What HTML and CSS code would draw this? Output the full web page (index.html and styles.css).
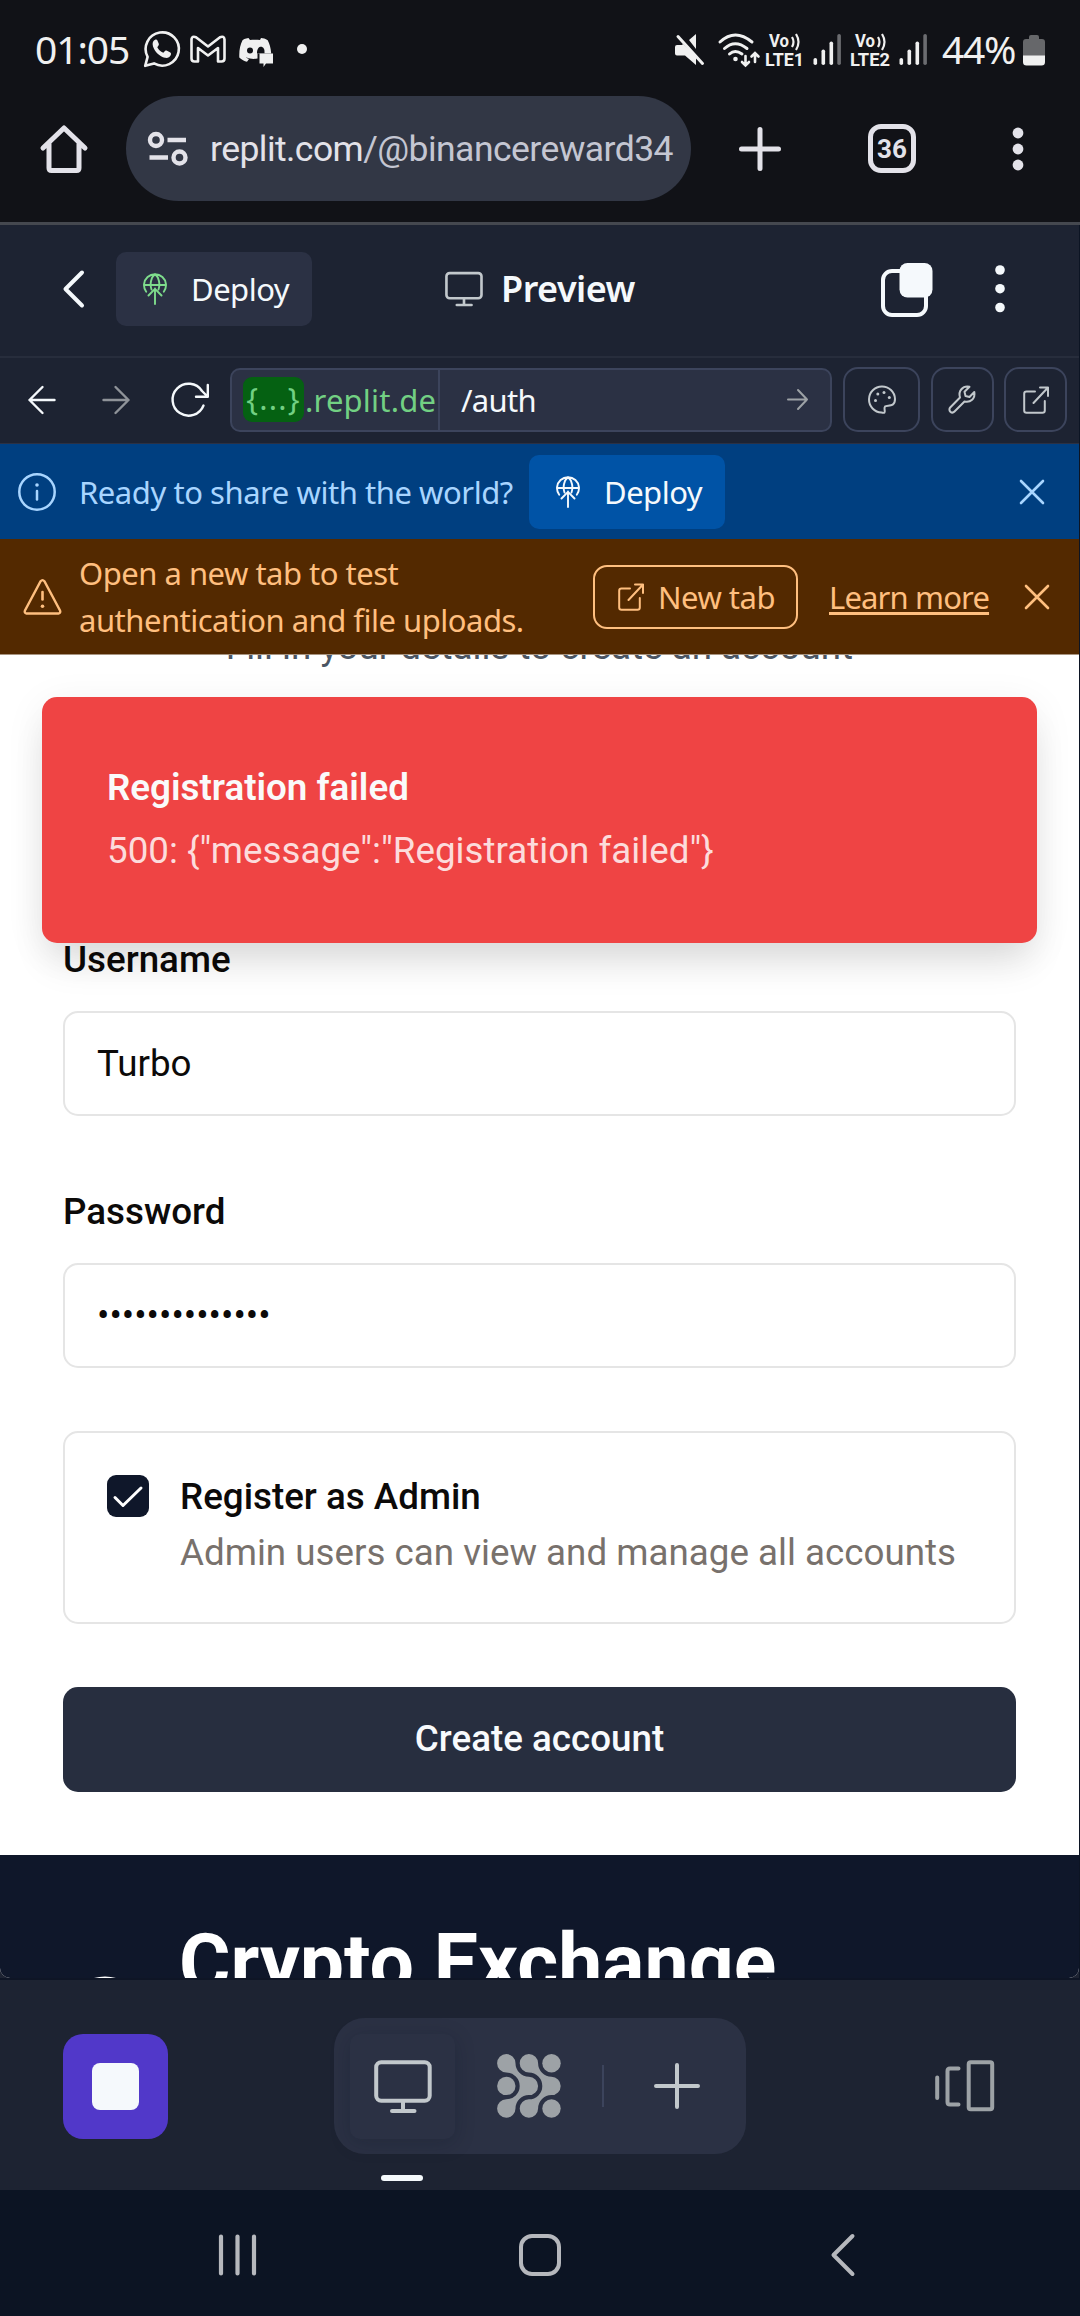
FILE: index.html
```html
<!DOCTYPE html>
<html lang="en">
<head>
<meta charset="utf-8">
<title>Preview</title>
<link rel="stylesheet" href="styles.css">
</head>
<body>
<svg width="0" height="0" class="defs">
  <symbol id="deploy" viewBox="0 0 24 32"><g fill="none" stroke="currentColor" stroke-width="1.9" stroke-linecap="round" stroke-linejoin="round"><path d="M3.200 18.800A11 11 0 1 1 20.800 18.800M1.200 12H22.800M8.500 16.500C6.600 11 8 4.500 12 1C16 4.500 17.400 11 15.500 16.500M12 31V15.500M5.500 22.500L12 15.800L18.500 22.500"/></g></symbol>
  <symbol id="external" viewBox="0 0 26 28"><g fill="none" stroke="currentColor" stroke-width="2" stroke-linecap="round" stroke-linejoin="round"><path d="M12 5.5H3.5A2.3 2.3 0 0 0 1.2 7.8V24.5A2.3 2.3 0 0 0 3.5 26.8H19.5A2.3 2.3 0 0 0 21.8 24.5V15M17 1.5H25V10M25 1.5L10.5 17"/></g></symbol>
  <symbol id="close" viewBox="0 0 26 26"><path d="M2 2L24 24M24 2L2 24" fill="none" stroke="currentColor" stroke-width="2.6" stroke-linecap="round"/></symbol>
  <symbol id="monitor" viewBox="0 0 58 53"><g fill="none" stroke="currentColor" stroke-width="4" stroke-linecap="round" stroke-linejoin="round"><rect x="2.2" y="2.2" width="53.5" height="38.5" rx="5"/><path d="M29 41V51M18 51H40.500"/></g></symbol>
</svg>

<header class="status">
  <span class="clock">01:05</span>
  <svg class="i-wa" viewBox="0 0 37 38"><path d="M2.200 35.800L4.600 26.800A16.600 16.600 0 1 1 11 33.400Z" fill="none" stroke="#f0f0f0" stroke-width="2.600" stroke-linejoin="round"/><path d="M12.500 9.500C10 10.500 9 13 10 16.500C12 22 16.500 26.500 22 27.800C25 28.300 27.500 26.800 28 24.200C28.200 23 27.500 22.500 26.500 22L23.500 20.600C22.600 20.300 22 20.700 21.500 21.400L20.300 22.800C17.500 21.600 15.500 19.700 14.300 17.200L15.500 15.500C16 14.800 16 14.200 15.700 13.500L14.300 10.300C14 9.500 13.300 9.200 12.500 9.500Z" fill="#f0f0f0"/></svg>
  <svg class="i-gm" viewBox="0 0 36 28"><path d="M1.500 4V23.500Q1.500 26.500 4.500 26.500H8V13L18 20.500L28 13V26.500H31.500Q34.500 26.500 34.500 23.500V4.500Q34 .5 30 2.200L18 11.500L6 2.200Q2 .5 1.500 4.500Z" fill="none" stroke="#f0f0f0" stroke-width="2.600" stroke-linejoin="round"/></svg>
  <svg class="i-dc" viewBox="0 0 34 30"><path d="M9.500 1C6 1.500 4 2.500 3.500 3.200C1.200 8 0 13 .3 20.500C2.500 22.700 5.500 24.300 8 24.800L10 22C8 21.500 7 20.500 7 20.300C11 22 15 22.300 18.500 21.500V16.500H32.200C31.800 11 30.500 6.500 28.700 3.200C26.500 1.700 24 1.200 22 1L21 3C18 2.600 14 2.600 11 3Z" fill="#f0f0f0"/><circle cx="11" cy="13.500" r="3" fill="#111217"/><path d="M18 16.500C18 11.500 20 9.800 22 9.800C24 9.800 25.800 12 25.500 15V16.500Z" fill="#111217"/><path d="M20.500 16.500H34V26.500H27L24.500 30V26.500H20.500Z" fill="#f0f0f0"/></svg>
  <span class="more-dot"></span>
  <svg class="i-status" viewBox="0 0 170 36">
    <g fill="#f0f0f0"><path d="M2 11H7L8 10L21 22V31L10 21.500H2Q0 21.500 0 19.500V13Q0 11 2 11ZM14 6L21 0V15Z"/><circle cx="60.500" cy="25" r="2.300"/>
    <rect x="138.500" y="24" width="3.600" height="7" rx="1.800"/><rect x="146.500" y="15.500" width="3.600" height="15.500" rx="1.800"/><rect x="154.500" y="7.500" width="3.600" height="23.500" rx="1.800"/></g>
    <rect x="162.300" y="0" width="3.600" height="31" rx="1.800" fill="#6b6c70"/>
    <path d="M3 2.500L27.500 29.500" stroke="#f0f0f0" stroke-width="3" stroke-linecap="round"/>
    <g fill="none" stroke="#f0f0f0" stroke-width="3" stroke-linecap="round"><path d="M45 8Q60 -6 77 8M49.500 14.500Q60 5 72 14.500M54.500 20Q60 15 67 20"/><path d="M70.500 22V31M67 28L70.500 31.500L74 28M80 28V19.500M76.500 22.500L80 19L83.500 22.500" stroke-width="2.600"/></g>
    <g fill="#f0f0f0" class="volte"><text x="94" y="13" textLength="20" lengthAdjust="spacingAndGlyphs">Vo</text><text x="90" y="31.500" textLength="39" lengthAdjust="spacingAndGlyphs">LTE1</text></g>
    <path d="M117 3Q120 8 117 13M121 0Q126 8 121 16" fill="none" stroke="#f0f0f0" stroke-width="2.200"/>
  </svg>
  <svg class="i-status2" viewBox="0 0 80 36">
    <g fill="#f0f0f0" class="volte"><text x="5" y="13" textLength="20" lengthAdjust="spacingAndGlyphs">Vo</text><text x="0" y="31.500" textLength="40" lengthAdjust="spacingAndGlyphs">LTE2</text></g>
    <path d="M28 3Q31 8 28 13M32 0Q37 8 32 16" fill="none" stroke="#f0f0f0" stroke-width="2.200"/>
    <g fill="#f0f0f0"><rect x="49.500" y="24" width="3.600" height="7" rx="1.800"/><rect x="57.500" y="15.500" width="3.600" height="15.500" rx="1.800"/><rect x="65.500" y="7.500" width="3.600" height="23.500" rx="1.800"/></g>
    <rect x="73.300" y="0" width="3.600" height="31" rx="1.800" fill="#6b6c70"/>
  </svg>
  <span class="percent">44%</span>
  <svg class="i-batt" viewBox="0 0 22 31"><path d="M6 4V2Q6 0 8 0H14Q16 0 16 2V4H19Q22 4 22 7V21H0V7Q0 4 3 4Z" fill="#66676a"/><path d="M0 20.500H22V27Q22 30.500 18.500 30.500H3.500Q0 30.500 0 27Z" fill="#f0f0f0"/></svg>
</header>

<nav class="browser">
  <svg class="i-home" viewBox="0 0 48 50"><path d="M3 24L24 4L45 24M9 20V44Q9 46.500 11.500 46.500H36.500Q39 46.500 39 44V20" fill="none" stroke="#e3e2e9" stroke-width="5" stroke-linecap="round" stroke-linejoin="round"/></svg>
  <div class="omnibox">
    <svg class="i-site" viewBox="0 0 40 34"><g fill="none" stroke="#e3e2e9" stroke-width="4.400"><circle cx="8" cy="8" r="6"/><circle cx="31.500" cy="25.500" r="6"/><path d="M19.500 8H38M1.500 25.500H20"/></g></svg>
    <span class="url"><b>replit.com</b>/@binancereward34</span>
  </div>
  <svg class="i-plus" viewBox="0 0 42 44"><path d="M21 2.500V41.500M2.500 22H39.500" stroke="#e3e2e9" stroke-width="5" stroke-linecap="round"/></svg>
  <div class="tabs">36</div>
  <svg class="i-dots" viewBox="0 0 12 44"><g fill="#e3e2e9"><circle cx="6" cy="6" r="5.400"/><circle cx="6" cy="22" r="5.400"/><circle cx="6" cy="38" r="5.400"/></g></svg>
</nav>

<div class="workspace">
  <div class="topbar">
    <svg class="i-back" viewBox="0 0 22 38"><path d="M19 2.500L2.500 19L19 35.500" fill="none" stroke="#f5f9fc" stroke-width="4" stroke-linecap="round" stroke-linejoin="round"/></svg>
    <div class="deploy dark"><svg><use href="#deploy"/></svg><span>Deploy</span></div>
    <svg class="i-mon"><use href="#monitor"/></svg>
    <h2>Preview</h2>
    <svg class="i-layers" viewBox="0 0 52 54"><rect x="2" y="8" width="43" height="44" rx="9" fill="none" stroke="#f5f9fc" stroke-width="4"/><rect x="18.500" y="0" width="33" height="34.500" rx="8" fill="#f5f9fc"/></svg>
    <svg class="i-menu" viewBox="0 0 10 50"><g fill="#f5f9fc"><circle cx="5" cy="6" r="4.800"/><circle cx="5" cy="24.700" r="4.800"/><circle cx="5" cy="43.500" r="4.800"/></g></svg>
  </div>
  <div class="address">
    <svg class="i-left" viewBox="0 0 28 28"><path d="M26.500 14H1.500M14.500 1L1.500 14L14.500 27" fill="none" stroke="#f5f9fc" stroke-width="2.400" stroke-linecap="round" stroke-linejoin="round"/></svg>
    <svg class="i-right" viewBox="0 0 28 28"><path d="M1.500 14H26.500M13.500 1L26.500 14L13.500 27" fill="none" stroke="#8f9399" stroke-width="2.400" stroke-linecap="round" stroke-linejoin="round"/></svg>
    <svg class="i-reload" viewBox="0 0 38 36"><path d="M32.500 23.500A16 16 0 1 1 31 9L36.500 14.500M36.800 3V14.800H25" fill="none" stroke="#f5f9fc" stroke-width="2.400" stroke-linecap="round" stroke-linejoin="round"/></svg>
    <div class="field">
      <div class="host"><span class="chip">{...}</span><span class="dom">.replit.de</span></div>
      <div class="path"><span>/auth</span><svg viewBox="0 0 21 21"><path d="M1 10.500H20M11 1L20 10.500L11 20" fill="none" stroke="#9da2a6" stroke-width="2" stroke-linecap="round" stroke-linejoin="round"/></svg></div>
    </div>
    <div class="tool wide"><svg viewBox="0 0 28 29"><path d="M16.500 27.500C17.500 25 15.500 23.500 17 21.500C19 19.500 27 23 27 14A13 13 0 1 0 13.500 27.500C14.500 27.800 16 28 16.500 27.500Z" fill="none" stroke="#c2c8cc" stroke-width="2"/><g fill="#c2c8cc"><circle cx="7.500" cy="15.500" r="1.500"/><circle cx="9.800" cy="9" r="1.500"/><circle cx="16" cy="7.500" r="1.500"/><circle cx="21.300" cy="12.500" r="1.500"/></g></svg></div>
    <div class="tool"><svg viewBox="0 0 28 29"><path d="M2.200 22.500L12 12.500C10 6 14.500 .5 21.500 1.800L16.500 6.800L17.500 11L21.500 12L26.300 7C27.500 13.500 22.500 18 16.500 16.500L6.500 26.500A2.900 2.900 0 0 1 2.200 22.500Z" fill="none" stroke="#c2c8cc" stroke-width="2" stroke-linejoin="round"/></svg></div>
    <div class="tool"><svg class="ext"><use href="#external"/></svg></div>
  </div>
  <div class="banner info">
    <svg class="i-info" viewBox="0 0 38 38"><circle cx="19" cy="19" r="17.700" fill="none" stroke="#a8d5ff" stroke-width="2.500"/><path d="M19 18V26.500" stroke="#a8d5ff" stroke-width="2.500" stroke-linecap="round"/><circle cx="19" cy="12" r="1.800" fill="#a8d5ff"/></svg>
    <span class="msg">Ready to share with the world?</span>
    <div class="deploy blue"><svg><use href="#deploy"/></svg><span>Deploy</span></div>
    <svg class="x"><use href="#close"/></svg>
  </div>
  <div class="banner warn">
    <svg class="i-warn" viewBox="0 0 39 36"><path d="M17.600 2.200Q19.500 0 21.400 2.200L37 31.500Q38 34 35.500 34.500H3.500Q1 34 2 31.500Z" fill="none" stroke="#ffbf7f" stroke-width="2.400"/><path d="M19.500 13V20.500" stroke="#ffbf7f" stroke-width="2.600" stroke-linecap="round"/><circle cx="19.500" cy="27.200" r="1.800" fill="#ffbf7f"/></svg>
    <p class="msg">Open a new tab to test<br><span>authentication and file uploads.</span></p>
    <div class="newtab"><svg><use href="#external"/></svg><span>New tab</span></div>
    <a class="learn">Learn more</a>
    <svg class="x"><use href="#close"/></svg>
  </div>
  <main class="viewport">
    <form class="form">
      <p class="hint">Fill in your details to create an account</p>
      <label class="first">Username</label>
      <input type="text" value="Turbo">
      <label class="second">Password</label>
      <input type="password" value="abcdefghijklmn">
      <div class="admin">
        <svg viewBox="0 0 42 42"><rect width="42" height="42" rx="9" fill="#0f172a"/><path d="M8 22.500L16 30.500L34 13" fill="none" stroke="#fff" stroke-width="3" stroke-linecap="round" stroke-linejoin="round"/></svg>
        <div><strong>Register as Admin</strong><span>Admin users can view and manage all accounts</span></div>
      </div>
      <button type="button">Create account</button>
    </form>
    <section class="hero">
      <svg viewBox="0 0 84 84"><circle cx="42" cy="42" r="35" fill="none" stroke="#fff" stroke-width="7"/></svg>
      <h1>Crypto Exchange</h1>
    </section>
    <div class="toast"><strong>Registration failed</strong><span>500: {"message":"Registration failed"}</span></div>
  </main>
</div>

<footer class="dock">
  <div class="stop"><i></i></div>
  <div class="pill">
    <div class="tab"><svg><use href="#monitor"/></svg></div>
    <svg class="i-grid" viewBox="0 0 64 64"><g fill="#9da2a6"><path id="flow" d="M9.300 .1A9.200 9.200 0 0 1 18.500 9.300A13.400 13.400 0 0 0 31.900 22.700A9.200 9.200 0 0 1 31.900 41.100A13.400 13.400 0 0 0 18.500 54.500A9.200 9.200 0 1 1 9.300 45.300A13.400 13.400 0 0 0 9.300 18.500A9.200 9.200 0 1 1 9.300 .1Z"/><use href="#flow" x="22.600"/><circle cx="9.300" cy="31.900" r="9.200"/><circle cx="54.500" cy="9.300" r="9.200"/><circle cx="54.500" cy="54.500" r="9.200"/></g></svg>
    <span class="sep"></span>
    <svg class="i-add" viewBox="0 0 46 46"><path d="M23 2V44M2 23H44" stroke="#c2c8cc" stroke-width="4" stroke-linecap="round"/></svg>
  </div>
  <svg class="i-cards" viewBox="0 0 60 52"><g fill="none" stroke="#9da2a6" stroke-width="4" stroke-linecap="round" stroke-linejoin="round"><path d="M2.200 17.500V38M23.500 8.500H15Q12.500 8.500 12.500 11V42Q12.500 44.500 15 44.500H23.500"/><rect x="33.700" y="2.200" width="23.500" height="47" rx="2"/></g></svg>
</footer>
<div class="sysnav">
  <svg class="n-recent" viewBox="0 0 40 42"><path d="M3 2.500V39.500M19.500 2.500V39.500M36 2.500V39.500" stroke="#b6b8bd" stroke-width="4.200" stroke-linecap="round"/></svg>
  <svg class="n-home" viewBox="0 0 42 42"><rect x="2" y="2" width="38" height="38" rx="11" fill="none" stroke="#b6b8bd" stroke-width="4"/></svg>
  <svg class="n-back" viewBox="0 0 24 42"><path d="M21.500 2L2.500 21L21.500 40" fill="none" stroke="#b6b8bd" stroke-width="4" stroke-linecap="round" stroke-linejoin="round"/></svg>
</div>
</body>
</html>
```

FILE: styles.css
```css
* { box-sizing: border-box; }
body { margin: 0; width: 1080px; height: 2316px; overflow: hidden; background: #0c1423; font-family: Roboto, sans-serif; font-size: 36.75px; }
svg { display: block; flex: none; overflow: visible; }
span, strong, a, h1, h2 { white-space: nowrap; }
.defs { position: absolute; }

.status { height: 96px; background: #111217; display: flex; align-items: center; color: #f0f0f0; font-family: "Noto Sans", sans-serif; font-size: 39px; padding: 0 0 0 35px; }
.clock { width: 108px; letter-spacing: -1.1px; }
.i-wa { width: 37px; height: 38px; margin-top: 2px; }
.i-gm { width: 36px; height: 28px; margin: 1px 0 0 10px; }
.i-dc { width: 34px; height: 30px; margin: 7px 0 0 13px; }
.more-dot { width: 10px; height: 10px; border-radius: 50%; background: #f0f0f0; margin: 2px 0 0 24px; }
.i-status { width: 170px; height: 36px; margin: 8px 0 0 368px; }
.i-status2 { width: 80px; height: 36px; margin: 8px 0 0 5px; }
.volte { font: 700 18px Roboto, sans-serif; }
.percent { width: 81px; margin-left: 12px; letter-spacing: -1.3px; }
.i-batt { width: 22px; height: 31px; margin-top: 4px; }

.browser { height: 129px; background: #111217; border-bottom: 3px solid #45484f; display: flex; align-items: center; padding: 0 0 21px 40px; }
.i-home { width: 48px; height: 50px; }
.omnibox { width: 565px; height: 105px; margin-left: 38px; border-radius: 53px; background: #323745; display: flex; align-items: center; padding-left: 22px; }
.i-site { width: 40px; height: 34px; }
.url { width: 470px; margin-left: 22px; color: #c4c6d2; font-size: 35.5px; letter-spacing: -.55px; }
.url b { color: #e3e2e9; font-weight: 400; }
.i-plus { width: 42px; height: 44px; margin-left: 48px; }
.tabs { width: 48px; height: 49px; margin-left: 87px; border: 5px solid #e3e2e9; border-radius: 13px; color: #e3e2e9; font-weight: 700; font-size: 26px; line-height: 40px; text-align: center; }
.i-dots { width: 12px; height: 44px; margin-left: 96px; }

.workspace { width: 1079px; font-family: "Noto Sans", sans-serif; font-size: 31px; color: #f5f9fc; background: #1d2332; }
.topbar { height: 133px; display: flex; align-items: center; padding: 0 0 4px 63px; border-bottom: 2px solid #272d3c; }
.i-back { width: 22px; height: 38px; }
.deploy { height: 74px; width: 196px; border-radius: 10px; display: flex; align-items: center; padding-left: 27px; }
.deploy svg { width: 24px; height: 32px; }
.deploy span { margin-left: 24px; letter-spacing: -.5px; }
.dark { background: #2b3144; margin-left: 31px; }
.dark svg { color: #7edc8c; }
.i-mon { width: 38px; height: 36px; margin-left: 133px; color: #c2c8cc; }
h2 { margin: 0 0 0 18px; width: 142px; font-size: 36px; font-weight: 600; letter-spacing: -.5px; }
.i-layers { width: 52px; height: 54px; margin: 2px 0 0 238px; }
.i-menu { width: 10px; height: 50px; margin: 1px 0 0 62px; }

.address { height: 86px; display: flex; align-items: center; padding: 0 0 2px 28px; border-bottom: 1px solid #2b3144; }
.i-left, .i-right { width: 28px; height: 28px; }
.i-right { margin-left: 46px; }
.i-reload { width: 38px; height: 36px; margin-left: 41px; }
.field { width: 602px; height: 64px; margin-left: 21px; border: 2px solid #3c445c; border-radius: 10px; background: #2b3144; display: flex; align-items: stretch; }
.host { width: 208px; border-right: 2px solid #3c445c; display: flex; align-items: center; color: #72d083; padding-left: 11px; }
.chip { width: 61px; height: 45px; flex: none; line-height: 42px; text-align: center; border-radius: 9px; background: #056112; letter-spacing: 1.2px; }
.dom { margin-left: 1px; letter-spacing: .2px; }
.path { flex: 1; display: flex; align-items: center; justify-content: space-between; padding: 0 22px 0 21px; letter-spacing: -.7px; }
.path svg { width: 21px; height: 21px; }
.tool { width: 63px; height: 65px; margin-left: 10.5px; border: 2px solid #3c445c; border-radius: 15px; display: flex; align-items: center; justify-content: center; color: #c2c8cc; }
.tool.wide { width: 77px; margin-left: 11px; }
.tool svg { width: 28px; height: 29px; }
.tool .ext { width: 26px; height: 28px; }

.banner { display: flex; align-items: center; }
.info { height: 95px; background: #003f80; color: #a8d5ff; padding: 0 0 0 18px; }
.i-info { width: 38px; height: 38px; }
.info .msg { width: 437px; margin-left: 23px; letter-spacing: -.45px; }
.blue { background: #0053a6; color: #f5f9fc; margin-left: 13px; }
.info .x { margin-left: 294px; }
.x { width: 26px; height: 26px; }
.warn { height: 116px; background: #532900; color: #ffbf7f; border-bottom: 1px solid #a89480; padding: 0 0 0 23px; }
.i-warn { width: 39px; height: 36px; }
.warn .msg { margin: 0 0 0 17px; width: 514px; line-height: 47px; letter-spacing: -.5px; }
.newtab { width: 205px; height: 64px; border: 2px solid #ffbf7f; border-radius: 14px; display: flex; align-items: center; padding-left: 23px; }
.newtab svg { width: 26px; height: 28px; }
.newtab span { margin-left: 14px; letter-spacing: -.5px; }
.learn { width: 161px; margin-left: 31px; text-decoration: underline; text-underline-offset: 3px; text-decoration-thickness: 3px; letter-spacing: -.85px; }
.warn .x { margin-left: 34px; }

.viewport { position: relative; height: 1323px; overflow: hidden; background: #fff; border-radius: 0 0 10px 10px; font-family: Roboto, sans-serif; font-size: 36.75px; color: #0c0a09; }
.form { height: 1200px; padding: 0 63px; display: flow-root; }
.hint { margin: -34px 0 0; line-height: 52px; text-align: center; color: #4b5563; }
.form label { display: block; font-weight: 500; line-height: 37px; }
.first { margin-top: 268px; }
.second { margin-top: 77px; }
.form input { display: block; width: 953px; height: 105px; margin-top: 33px; border: 2px solid #e5e5e5; border-radius: 15px; padding: 0 32px; font: inherit; color: inherit; background: #fff; }
.admin { width: 953px; height: 193px; margin-top: 63px; border: 2px solid #e5e5e5; border-radius: 15px; padding: 42px; display: flex; gap: 32px; }
.admin svg { width: 42px; height: 42px; }
.admin div { display: flex; flex-direction: column; padding-top: 1px; margin-left: -1px; }
.admin strong { font-weight: 500; line-height: 42px; }
.admin span { color: #78716c; line-height: 52px; margin-top: 9px; }
.form button { display: block; width: 953px; height: 105px; margin-top: 63px; border: 0; border-radius: 15px; background: #272e3f; color: #f8fafc; font: 500 36.75px Roboto, sans-serif; padding: 0 0 2px; }
.hero { height: 260px; background: #0f172a; display: flex; padding: 61px 63px 0; }
.hero svg { width: 84px; height: 84px; margin-top: 57px; }
h1 { margin: 0 0 0 32px; color: #fff; font-size: 78.75px; line-height: 94px; font-weight: 700; }
.toast { position: absolute; left: 42px; top: 42px; width: 995px; height: 246px; border-radius: 15px; background: #ef4444; padding: 65px; display: flex; flex-direction: column; box-shadow: 0 26px 39px -8px rgba(0,0,0,.11), 0 8px 40px rgba(0,0,0,.07); }
.toast strong { font-weight: 600; line-height: 52px; color: #fafafa; }
.toast span { line-height: 52px; margin-top: 11px; color: #fcdcdc; }

.dock { height: 212px; background: #1d2332; border-top: 2px solid #0e1525; display: flex; align-items: center; padding: 2px 0 0 63px; }
.stop { width: 105px; height: 105px; border-radius: 20px; background: #5138c9; display: flex; align-items: center; justify-content: center; }
.stop i { width: 47px; height: 47px; border-radius: 8px; background: #f5f9fc; }
.pill { position: relative; width: 412px; height: 136px; margin-left: 166px; border-radius: 31px; background: #2b3144; display: flex; align-items: center; padding-left: 16px; }
.tab { width: 105px; height: 105px; border-radius: 10px; background: #2b3144; box-shadow: 0 4px 20px rgba(10,16,30,.22); display: flex; align-items: center; justify-content: center; color: #c2c8cc; }
.tab svg { width: 58px; height: 53px; }
.pill::after { content: ""; position: absolute; left: 47px; top: 157px; width: 42px; height: 6px; border-radius: 3px; background: #f5f9fc; }
.i-grid { width: 64px; height: 64px; margin-left: 42px; }
.sep { width: 2px; height: 42px; margin-left: 41px; background: #3c445c; }
.i-add { width: 46px; height: 46px; margin-left: 50px; }
.i-cards { width: 60px; height: 52px; margin-left: 189px; }
.sysnav { height: 126px; background: #0c1423; display: flex; align-items: center; padding: 4px 0 0 218px; }
.n-recent { width: 40px; height: 42px; }
.n-home { width: 42px; height: 42px; margin-left: 261px; }
.n-back { width: 24px; height: 42px; margin-left: 270px; }
```
